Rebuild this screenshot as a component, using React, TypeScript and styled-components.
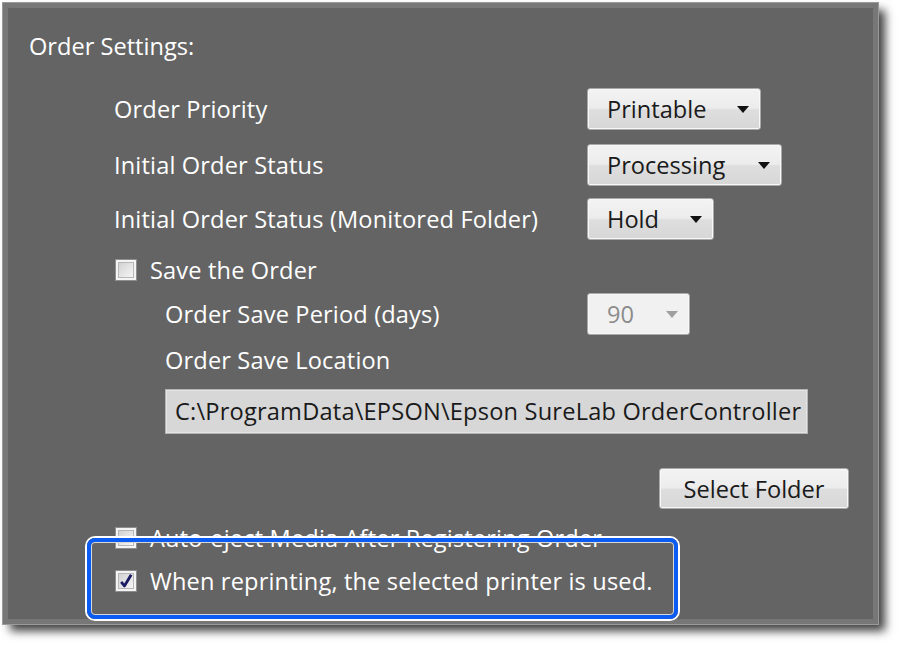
import React from "react";
import styled, { createGlobalStyle } from "styled-components";

const Global = createGlobalStyle`
  html, body { margin: 0; padding: 0; background: #ffffff; }
  body { font-family: "Open Sans", "Noto Sans", sans-serif; }
  * { box-sizing: border-box; }
`;

const Page = styled.div`
  width: 900px;
  height: 647px;
  padding: 3px 0 0 3px;
  background: #fff;
`;

const Panel = styled.div`
  width: 875px;
  height: 621px;
  background: #646464;
  border: 5px solid #777777;
  outline: 1px solid #9a9a9a;
  box-shadow: 7px 7px 9px rgba(0, 0, 0, 0.75);
  padding: 23px 0 0 21px;
  color: #fff;
  font-size: 23.6px;
  position: relative;
`;

const Title = styled.div`
  line-height: 30px;
  height: 30px;
`;

const Body = styled.div`
  margin-left: 85px;
  display: flex;
  flex-direction: column;
`;

const SettingRow = styled.div<{ $top: number }>`
  display: grid;
  grid-template-columns: 473px auto;
  align-items: center;
  margin-top: ${(p) => p.$top}px;
`;

const Label = styled.div<{ $indent?: number; $top?: number }>`
  line-height: 30px;
  margin-left: ${(p) => p.$indent ?? 0}px;
  margin-top: ${(p) => p.$top ?? 0}px;
  white-space: nowrap;
  letter-spacing: 0.15px;
`;

const Select = styled.div<{ $w: number; $disabled?: boolean }>`
  width: ${(p) => p.$w}px;
  height: 42px;
  display: flex;
  align-items: center;
  justify-content: space-between;
  padding: 0 11px 0 19px;
  border-radius: 3px;
  border: 1px solid #a9a9a9;
  box-shadow: inset 0 0 0 1px #f8f8f8;
  background: ${(p) =>
    p.$disabled
      ? "#f1f1f1"
      : "linear-gradient(#f3f3f3 0%, #ececec 48%, #dedede 52%, #d7d7d7 100%)"};
  color: ${(p) => (p.$disabled ? "#8c8c8c" : "#1a1a1a")};
  font-size: 23.6px;
`;

const Arrow = styled.span<{ $disabled?: boolean }>`
  width: 0;
  height: 0;
  border-left: 6px solid transparent;
  border-right: 6px solid transparent;
  border-top: 7px solid ${(p) => (p.$disabled ? "#a0a0a0" : "#111")};
`;

const CheckRow = styled.div<{ $top: number }>`
  display: flex;
  align-items: center;
  gap: 13px;
  margin-top: ${(p) => p.$top}px;
  margin-left: 1px;
  line-height: 30px;
  letter-spacing: 0.15px;
`;

const Box = styled.span`
  width: 22px;
  height: 22px;
  border: 1px solid #8e8e8e;
  background: #f4f4f4;
  padding: 2px;
  display: flex;
  align-items: center;
  justify-content: center;
  flex: none;
`;

const BoxInner = styled.span`
  width: 100%;
  height: 100%;
  border: 1px solid #b7b7b7;
  background: linear-gradient(135deg, #d2d2d2, #f6f6f6);
  display: flex;
  align-items: center;
  justify-content: center;
`;

const PathBox = styled.div`
  margin: 14px 0 0 51px;
  width: 643px;
  height: 45px;
  background: #d7d7d7;
  border: 1px solid #b4b4b4;
  box-shadow: inset 0 0 0 1px #e4e4e4;
  color: #1a1a1a;
  font-size: 23.6px;
  letter-spacing: 0.2px;
  line-height: 43px;
  padding-left: 9px;
  white-space: nowrap;
  overflow: hidden;
`;

const ButtonRow = styled.div`
  display: flex;
  justify-content: flex-end;
  margin: 34px 24px 0 0;
`;

const Button = styled.div`
  width: 190px;
  height: 41px;
  border-radius: 3px;
  border: 1px solid #a9a9a9;
  box-shadow: inset 0 0 0 1px #f8f8f8;
  background: linear-gradient(#f3f3f3 0%, #ececec 48%, #dedede 52%, #d7d7d7 100%);
  color: #1a1a1a;
  font-size: 23.6px;
  display: flex;
  align-items: center;
  justify-content: center;
`;

const HighlightWrap = styled.div`
  position: relative;
`;

const Highlight = styled.div`
  position: absolute;
  left: -27px;
  top: -15px;
  width: 591px;
  height: 81px;
  border-radius: 8px;
  border: 4px solid #0a5cf2;
  box-shadow: 0 0 0 2px #ffffff, inset 0 0 0 1px #d8d8d8;
  pointer-events: none;
`;

function Checkbox({ checked }: { checked?: boolean }) {
  return (
    <Box>
      <BoxInner>
        {checked && (
          <svg width="16" height="16" viewBox="0 0 14 14">
            <path
              d="M2.2 7.8 L5.4 12 L12.2 0.8"
              fill="none"
              stroke="#1c1c66"
              strokeWidth="2.8"
              strokeLinejoin="round"
            />
          </svg>
        )}
      </BoxInner>
    </Box>
  );
}

export default function App() {
  return (
    <Page>
      <Global />
      <Panel>
        <Title>Order Settings:</Title>
        <Body>
          <SettingRow $top={27}>
            <Label>Order Priority</Label>
            <Select $w={174}>
              Printable <Arrow />
            </Select>
          </SettingRow>
          <SettingRow $top={14}>
            <Label>Initial Order Status</Label>
            <Select $w={195}>
              Processing <Arrow />
            </Select>
          </SettingRow>
          <SettingRow $top={12}>
            <Label>Initial Order Status (Monitored Folder)</Label>
            <Select $w={127}>
              Hold <Arrow />
            </Select>
          </SettingRow>
          <CheckRow $top={15}>
            <Checkbox />
            <span>Save the Order</span>
          </CheckRow>
          <SettingRow $top={8}>
            <Label $indent={51}>Order Save Period (days)</Label>
            <Select $w={103} $disabled>
              90 <Arrow $disabled />
            </Select>
          </SettingRow>
          <Label $indent={51} $top={10}>
            Order Save Location
          </Label>
          <PathBox>C:\ProgramData\EPSON\Epson SureLab OrderController</PathBox>
          <ButtonRow>
            <Button>Select Folder</Button>
          </ButtonRow>
          <CheckRow $top={14}>
            <Checkbox />
            <span>Auto-eject Media After Registering Order</span>
          </CheckRow>
          <HighlightWrap>
            <CheckRow $top={13}>
              <Checkbox checked />
              <span>When reprinting, the selected printer is used.</span>
            </CheckRow>
            <Highlight />
          </HighlightWrap>
        </Body>
      </Panel>
    </Page>
  );
}
